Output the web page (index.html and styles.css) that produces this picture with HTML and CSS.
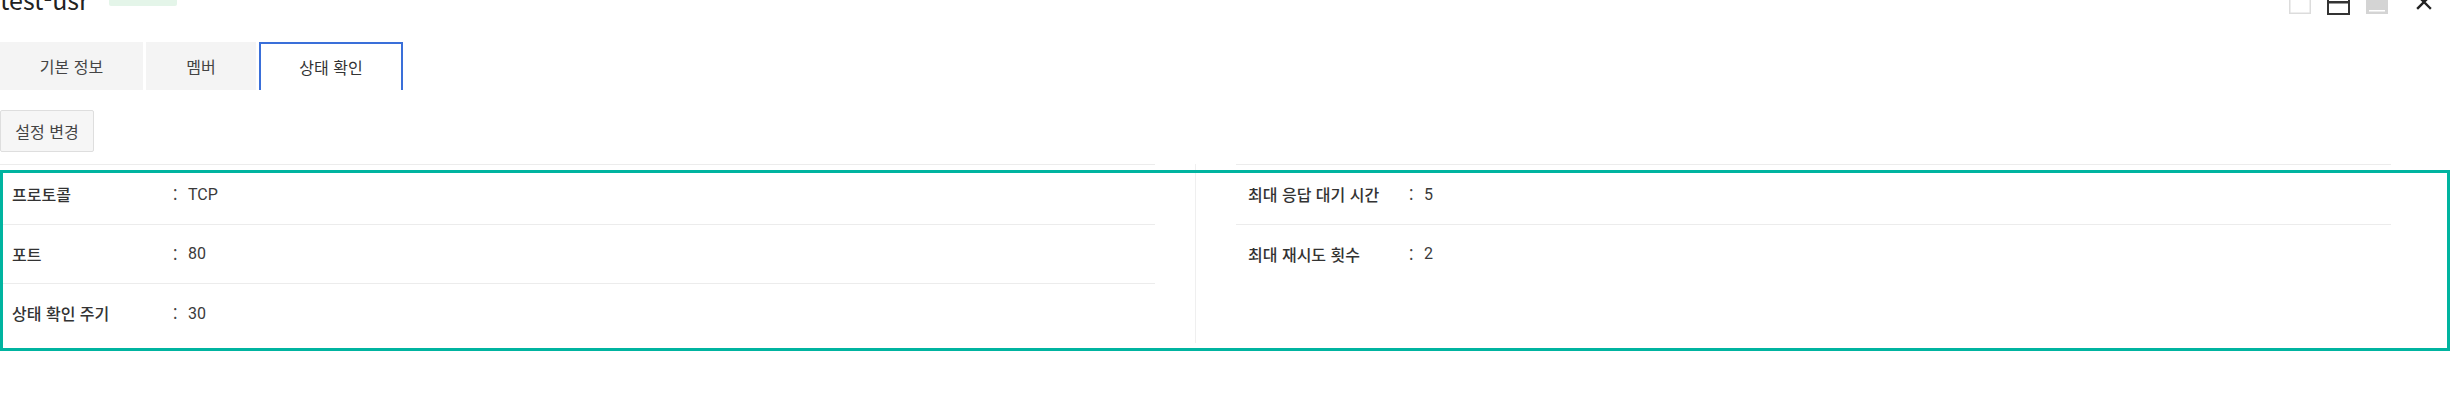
FILE: index.html
```html
<!DOCTYPE html>
<html lang="ko">
<head>
<meta charset="utf-8">
<title>test-usr</title>
<link rel="stylesheet" href="styles.css">
</head>
<body>
<div class="page">
  <header class="titlebar">
    <h1 class="title">test-usr</h1>
    <span class="badge"></span>
    <div class="win-controls">
      <svg class="win-icon" width="22" height="22" viewBox="0 0 22 22"><rect x="0.75" y="0.75" width="20.5" height="20.5" fill="#fff" stroke="#dcdcdc" stroke-width="1.5"/></svg>
      <svg class="win-icon" width="23" height="23" viewBox="0 0 23 23"><rect x="1" y="1" width="21" height="21" fill="#fff" stroke="#333" stroke-width="2"/><rect x="1" y="9" width="21" height="2.5" fill="#333"/></svg>
      <svg class="win-icon" width="22" height="22" viewBox="0 0 22 22"><rect x="0" y="0" width="22" height="22" fill="#d4d4d4"/><rect x="3" y="18" width="16" height="1.5" fill="#fff"/></svg>
      <svg class="win-close" width="16" height="16" viewBox="0 0 16 16"><path d="M2 2 L14 14 M14 2 L2 14" stroke="#222" stroke-width="2.4" stroke-linecap="square"/></svg>
    </div>
  </header>

  <nav class="tabs">
    <button class="tab tab-basic">기본 정보</button>
    <button class="tab tab-member">멤버</button>
    <button class="tab tab-health active">상태 확인</button>
  </nav>

  <div class="toolbar">
    <button class="btn">설정 변경</button>
  </div>

  <section class="detail">
    <div class="grid">
      <div class="col">
        <div class="row"><span class="label">프로토콜</span><span class="colon">:</span><span class="value">TCP</span></div>
        <div class="row"><span class="label">포트</span><span class="colon">:</span><span class="value">80</span></div>
        <div class="row"><span class="label">상태 확인 주기</span><span class="colon">:</span><span class="value">30</span></div>
      </div>
      <div class="divider"></div>
      <div class="col col-right">
        <div class="row"><span class="label">최대 응답 대기 시간</span><span class="colon">:</span><span class="value">5</span></div>
        <div class="row"><span class="label">최대 재시도 횟수</span><span class="colon">:</span><span class="value">2</span></div>
      </div>
    </div>
    <div class="highlight"></div>
  </section>
</div>
</body>
</html>
```

FILE: styles.css
```css
html {
  overflow: hidden;
}

html, body {
  margin: 0;
  padding: 0;
  background: #fff;
}

body {
  font-family: "Noto Sans CJK KR", "Noto Sans", sans-serif;
  color: #333;
  font-size: 16px;
}

.page {
  width: 2450px;
  padding-bottom: 40px;
}

.titlebar {
  display: flex;
  align-items: flex-start;
  height: 30px;
  margin-top: -16px;
  padding-right: 18px;
}

.title {
  margin: 0;
  font-size: 25px;
  line-height: 30px;
  font-weight: 400;
  color: #222;
}

.badge {
  width: 68px;
  height: 20px;
  margin-top: 2px;
  margin-left: 20px;
  background: #e4f5e9;
  border-radius: 2px;
}

.win-controls {
  margin-left: auto;
  display: flex;
  align-items: flex-start;
}

.win-icon {
  display: block;
  margin-top: 8px;
  margin-left: 16px;
}

.win-close {
  display: block;
  margin-top: 10px;
  margin-left: 28px;
}

.tabs {
  display: flex;
  gap: 3px;
  margin-top: 28px;
  height: 48px;
}

.tab {
  font-family: inherit;
  font-size: 16px;
  color: #444;
  background: #f4f4f4;
  border: none;
  padding: 0;
  height: 48px;
  cursor: pointer;
}

.tab-basic { width: 143px; }
.tab-member { width: 110px; }
.tab-health { width: 144px; }

.tab.active {
  background: #fff;
  border: 2px solid #3a6fd9;
  border-bottom: none;
  color: #333;
}

.toolbar {
  margin-top: 20px;
  display: flex;
}

.btn {
  font-family: inherit;
  font-size: 16px;
  color: #444;
  background: #f6f6f6;
  border: 1px solid #dedede;
  border-radius: 2px;
  width: 94px;
  height: 42px;
  padding: 0;
}

.detail {
  position: relative;
  margin-top: 12px;
}

.grid {
  display: grid;
  grid-template-columns: 1fr 1px 1fr;
  column-gap: 40px;
  width: 2391px;
}

.divider {
  background: #efefef;
}

.col {
  display: flex;
  flex-direction: column;
}

.row {
  display: flex;
  align-items: center;
  height: 59.5px;
  box-sizing: border-box;
  border-top: 1px solid #ececec;
}

.label {
  width: 161px;
  padding-left: 12px;
  font-weight: 500;
  color: #333;
}

.colon {
  width: 15px;
  color: #444;
}

.value {
  font-family: "Roboto", "Noto Sans CJK KR", sans-serif;
  font-size: 16px;
  color: #3a3a3a;
}

.highlight {
  position: absolute;
  left: 0;
  right: 0;
  top: 6px;
  bottom: -8px;
  border: 3px solid #00b4a0;
  pointer-events: none;
}
```
